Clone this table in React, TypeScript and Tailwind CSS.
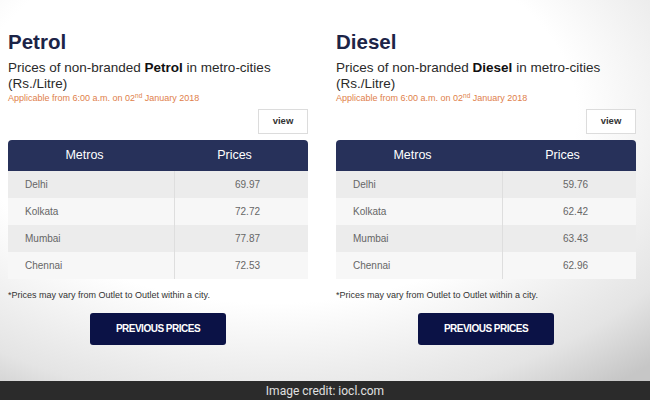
const petrol = [
  { city: "Delhi", price: "69.97" },
  { city: "Kolkata", price: "72.72" },
  { city: "Mumbai", price: "77.87" },
  { city: "Chennai", price: "72.53" },
];

const diesel = [
  { city: "Delhi", price: "59.76" },
  { city: "Kolkata", price: "62.42" },
  { city: "Mumbai", price: "63.43" },
  { city: "Chennai", price: "62.96" },
];

type Row = { city: string; price: string };

function PricePanel({ fuel, rows }: { fuel: string; rows: Row[] }) {
  return (
    <div className="w-[300px] flex flex-col">
      <h2 className="text-[20.5px] leading-[24px] font-bold text-[#1c2447] mt-[30px]">{fuel}</h2>
      <p className="text-[13.5px] leading-[16px] text-[#2a2a2a] mt-[6px]">
        Prices of non-branded <b className="text-[#111]">{fuel}</b> in metro-cities
        <br />
        (Rs./Litre)
      </p>
      <p className="text-[9px] leading-[11px] text-[#e0804a] mt-[1px]">
        Applicable from 6:00 a.m. on 02<sup className="text-[6.5px]">nd</sup> January 2018
      </p>
      <div className="flex justify-end mt-[5px]">
        <button className="w-[50px] h-[25px] bg-white border border-[#dcdcdc] text-[9.5px] font-bold text-[#333]">
          view
        </button>
      </div>
      <div className="mt-[6px]">
        <div className="flex h-[31px] items-center bg-[#27315a] rounded-t-[4px] text-white text-[12.5px]">
          <div className="w-[167px] text-center pr-[14px]">Metros</div>
          <div className="flex-1 text-center pr-[14px]">Prices</div>
        </div>
        {rows.map((r, i) => (
          <div
            key={r.city}
            className={
              "flex h-[27px] items-center text-[10px] text-[#666] " +
              (i % 2 === 0 ? "bg-[#ececec]" : "bg-[#f7f7f7]")
            }
          >
            <div className="w-[167px] h-full flex items-center pl-[17px] border-r border-[#dedede]">{r.city}</div>
            <div className="flex-1 text-center pl-[12px]">{r.price}</div>
          </div>
        ))}
      </div>
      <p className="text-[9px] text-[#333] mt-[10px]">*Prices may vary from Outlet to Outlet within a city.</p>
      <div className="flex mt-[10px] pl-[82px]">
        <button className="w-[136px] h-[32px] rounded-[3px] bg-[#0b1246] text-white text-[10px] font-bold tracking-[-0.5px]">
          PREVIOUS PRICES
        </button>
      </div>
    </div>
  );
}

export default function App() {
  return (
    <div className="w-[650px] h-[400px] flex flex-col font-['Liberation_Sans',Arial,sans-serif]">
      <div className="h-[381px] flex gap-[28px] px-[8px] bg-[radial-gradient(ellipse_85%_90%_at_42%_30%,#ffffff_55%,#e4e4e4_85%,#c6c6c6_100%)]">
        <PricePanel fuel="Petrol" rows={petrol} />
        <PricePanel fuel="Diesel" rows={diesel} />
      </div>
      <div className="h-[19px] bg-[#2b2b2b] flex items-center justify-center text-[12px] text-[#e0e0e0] font-['Roboto',sans-serif]">
        Image credit: iocl.com
      </div>
    </div>
  );
}
